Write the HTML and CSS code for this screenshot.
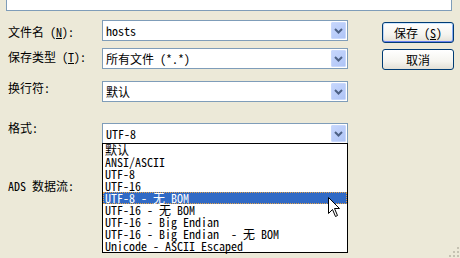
FILE: index.html
```html
<!DOCTYPE html>
<html>
<head>
<meta charset="utf-8">
<link rel="stylesheet" href="styles.css">
</head>
<body>
<div class="dialog">
  <div class="topbox"></div>
  <div class="main">
    <div class="form">
      <div class="row r1">
        <div class="lbl l1">文件名 (<u>N</u>):</div>
        <div class="combo"><span class="val">hosts</span><span class="drop"><svg width="9" height="6" viewBox="0 0 9 6"><path d="M1 1 L4.5 4.5 L8 1" fill="none" stroke="#4d6185" stroke-width="2"/></svg></span></div>
      </div>
      <div class="row r2">
        <div class="lbl l2">保存类型 (<u>T</u>):</div>
        <div class="combo"><span class="val">所有文件 (*.*)</span><span class="drop"><svg width="9" height="6" viewBox="0 0 9 6"><path d="M1 1 L4.5 4.5 L8 1" fill="none" stroke="#4d6185" stroke-width="2"/></svg></span></div>
      </div>
      <div class="row r3">
        <div class="lbl l3">换行符:</div>
        <div class="combo"><span class="val">默认</span><span class="drop"><svg width="9" height="6" viewBox="0 0 9 6"><path d="M1 1 L4.5 4.5 L8 1" fill="none" stroke="#4d6185" stroke-width="2"/></svg></span></div>
      </div>
      <div class="row r4">
        <div class="lbl l4">格式:</div>
        <div class="combo open"><span class="val">UTF-8</span><span class="drop"><svg width="9" height="6" viewBox="0 0 9 6"><path d="M1 1 L4.5 4.5 L8 1" fill="none" stroke="#4d6185" stroke-width="2"/></svg></span>
          <ul class="list">
            <li>默认</li>
            <li>ANSI/ASCII</li>
            <li>UTF-8</li>
            <li>UTF-16</li>
            <li class="sel">UTF-8 - 无 BOM</li>
            <li>UTF-16 - 无 BOM</li>
            <li>UTF-16 - Big Endian</li>
            <li>UTF-16 - Big Endian  - 无 BOM</li>
            <li>Unicode - ASCII Escaped</li>
          </ul>
        </div>
      </div>
      <div class="lbl ads">ADS 数据流:</div>
    </div>
    <div class="buttons">
      <div class="btn default">保存 (<u>S</u>)</div>
      <div class="btn">取消</div>
    </div>
  </div>
  <svg class="cursor" width="13" height="21" viewBox="0 0 13 21"><path d="M0.5 0.5 L0.5 16.5 L4.5 12.5 L7.5 19.5 L9.5 18.5 L6.5 11.5 L11.5 11.5 Z" fill="#fff" stroke="#000" stroke-width="1"/></svg>
  <svg class="grip" width="12" height="12" viewBox="0 0 12 12">
    <rect x="9" y="1" width="2" height="2" fill="#c5c2b2"/>
    <rect x="5" y="5" width="2" height="2" fill="#c5c2b2"/>
    <rect x="9" y="5" width="2" height="2" fill="#c5c2b2"/>
    <rect x="1" y="9" width="2" height="2" fill="#c5c2b2"/>
    <rect x="5" y="9" width="2" height="2" fill="#c5c2b2"/>
    <rect x="9" y="9" width="2" height="2" fill="#c5c2b2"/>
  </svg>
</div>
</body>
</html>
```

FILE: styles.css
```css
* { box-sizing: border-box; }
html, body { margin: 0; padding: 0; }
body {
  background: #ece9d8;
  width: 460px;
  height: 258px;
  overflow: hidden;
  font-family: "Noto Sans Mono CJK SC", "Liberation Mono", "Noto Sans CJK SC", monospace;
  font-size: 12px;
  line-height: 12px;
  color: #000;
}
.dialog { position: relative; width: 460px; height: 258px; }
.topbox {
  margin-left: 6px;
  width: 446px;
  height: 11px;
  background: #fff;
  border: 1px solid #7f9db9;
  border-top: none;
}
.main { display: flex; padding-left: 8px; }
.form { width: 340px; display: flex; flex-direction: column; }
.row { display: flex; height: 21px; }
.r1 { margin-top: 9px; }
.r2 { margin-top: 7px; }
.r3 { margin-top: 12px; }
.r4 { margin-top: 21px; }
.lbl { width: 94px; white-space: pre; }
.l1 { padding-top: 6px; }
.l2 { padding-top: 3px; }
.l3 { padding-top: 1px; }
.l4 { margin-top: -1px; }
.ads { margin-top: 36px; }
.combo {
  position: relative;
  width: 246px;
  height: 21px;
  background: #fff;
  border: 1px solid #7f9db9;
  display: flex;
  align-items: center;
  padding-left: 3px;
}
.val { white-space: pre; }
.drop {
  position: absolute;
  top: 1px;
  right: 1px;
  width: 15px;
  height: 17px;
  border-radius: 1px;
  background: linear-gradient(135deg, #c6d6fc 0%, #b9ccf9 60%, #aec4f6 100%);
  border: 1px solid #c8d8fc;
  display: flex;
  align-items: center;
  justify-content: center;
}
.list {
  position: absolute;
  left: -1px;
  top: 19px;
  width: 246px;
  margin: 0;
  padding: 0;
  list-style: none;
  background: #fff;
  border: 1px solid #000;
  z-index: 2;
}
.list li {
  height: 12px;
  line-height: 12px;
  padding-left: 1px;
  white-space: pre;
  border: 1px solid transparent;
  border-width: 0 1px;
}
.list li.sel {
  background: #316ac5;
  color: #fff;
  border: 1px dotted #e3a24a;
  line-height: 10px;
}
.buttons {
  margin-left: 34px;
  padding-top: 11px;
  display: flex;
  flex-direction: column;
  gap: 6px;
}
.btn {
  width: 72px;
  height: 21px;
  border: 1px solid #003c74;
  border-radius: 3px;
  background: linear-gradient(#ffffff 0%, #f5f4ef 60%, #e3e0d6 100%);
  display: flex;
  align-items: center;
  justify-content: center;
  white-space: pre;
}
.btn.default {
  box-shadow: inset 0 1px 0 #cee7ff, inset 0 -1px 0 #6982ee, inset 1px 0 0 #bcd4f6, inset -1px 0 0 #89adf4;
}
.cursor { position: absolute; left: 328px; top: 197px; z-index: 5; }
.grip { position: absolute; right: 0; bottom: 0; }
```
